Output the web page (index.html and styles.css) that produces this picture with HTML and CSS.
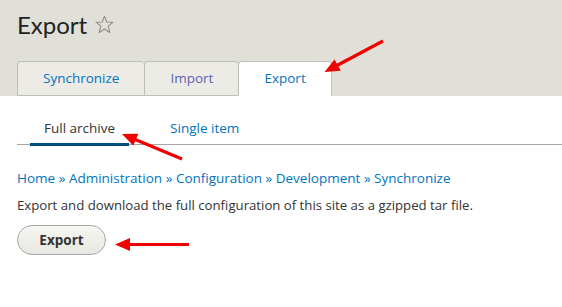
FILE: index.html
```html
<!DOCTYPE html>
<html lang="en">
<head>
    <meta charset="UTF-8">
    <meta name="viewport" content="width=device-width, initial-scale=1.0">
    <title>Export</title>
    <link rel="stylesheet" href="styles.css">
</head>
<body>
    <header class="page-header">
        <h1 class="page-title">Export
            <svg class="star" width="19" height="19" viewBox="0 0 20 20">
                <polygon points="10,1.2 12.4,7.3 19,7.6 13.9,11.8 15.6,18.4 10,14.7 4.4,18.4 6.1,11.8 1,7.6 7.6,7.3" fill="none" stroke="#8e8d86" stroke-width="1.1" stroke-linejoin="round"/>
            </svg>
        </h1>
        <nav class="tabs">
            <a href="#" class="tab">Synchronize</a>
            <a href="#" class="tab visited">Import</a>
            <a href="#" class="tab active">Export</a>
        </nav>
    </header>
    <div class="content">
        <nav class="subtabs">
            <a href="#" class="subtab active">Full archive</a>
            <a href="#" class="subtab">Single item</a>
        </nav>
        <div class="breadcrumb">
            <a href="#">Home</a> » <a href="#">Administration</a> » <a href="#">Configuration</a> » <a href="#">Development</a> » <a href="#">Synchronize</a>
        </div>
        <p class="description">Export and download the full configuration of this site as a gzipped tar file.</p>
        <button class="button">Export</button>
    </div>
    <svg class="arrows" width="562" height="307" viewBox="0 0 562 307">
        <defs>
            <marker id="head" markerUnits="userSpaceOnUse" markerWidth="16" markerHeight="14" refX="2" refY="6.5" orient="auto">
                <polygon points="0,0 15,6.5 0,13" fill="#f20000"/>
            </marker>
        </defs>
        <line x1="383" y1="41" x2="336" y2="66" stroke="#f20000" stroke-width="3.2" marker-end="url(#head)"/>
        <line x1="182" y1="159" x2="134" y2="139" stroke="#f20000" stroke-width="3.2" marker-end="url(#head)"/>
        <line x1="189" y1="244.5" x2="128" y2="244.5" stroke="#f20000" stroke-width="3.2" marker-end="url(#head)"/>
    </svg>
</body>
</html>
```
FILE: styles.css
```css
body {
    margin: 0;
    font-family: "Open Sans", "DejaVu Sans", sans-serif;
    font-size: 13.5px;
    color: #333;
    background: #fff;
    position: relative;
}
a {
    color: #0074bd;
    text-decoration: none;
}
.page-header {
    background-color: #e0e0d8;
    padding: 10px 17px 0;
}
.page-title {
    margin: 0;
    font-family: Lato, "Open Sans", sans-serif;
    font-size: 24px;
    font-weight: normal;
    color: #222;
    line-height: 30px;
    display: flex;
    align-items: center;
    gap: 8px;
}
.star {
    margin-top: -2px;
}
.tabs {
    display: flex;
    margin-top: 21px;
}
.tab {
    height: 33px;
    line-height: 33px;
    padding: 0 25px;
    background-color: #ecebe6;
    border: 1px solid #bfbfba;
    border-right: none;
    border-radius: 4px 4px 0 0;
}
.tab.visited {
    color: #5f63b0;
}
.tab.active {
    background-color: #fff;
    border-right: 1px solid #bfbfba;
    border-bottom-color: #fff;
}
.content {
    padding: 0 0 0 17px;
}
.subtabs {
    display: flex;
    gap: 27px;
    padding-left: 13px;
    margin-top: 23px;
    border-bottom: 1px solid #a6a6a6;
}
.subtab {
    padding: 0 14px 6px;
    line-height: 18px;
    margin-bottom: -2px;
    border-bottom: 3px solid transparent;
}
.subtab.active {
    color: #333;
    border-bottom-color: #004f80;
}
.breadcrumb {
    margin-top: 24px;
    line-height: 18px;
    color: #0074bd;
}
.description {
    margin: 9px 0 0;
    font-size: 13.2px;
    line-height: 18px;
}
.button {
    margin-top: 11px;
    width: 89px;
    height: 30px;
    border: 1px solid #a6a6a6;
    border-radius: 20px;
    background: linear-gradient(#f6f6f2, #e8e7e1);
    font-family: inherit;
    font-size: 13.5px;
    font-weight: bold;
    color: #333;
}
.arrows {
    position: absolute;
    top: 0;
    left: 0;
    pointer-events: none;
}
```
